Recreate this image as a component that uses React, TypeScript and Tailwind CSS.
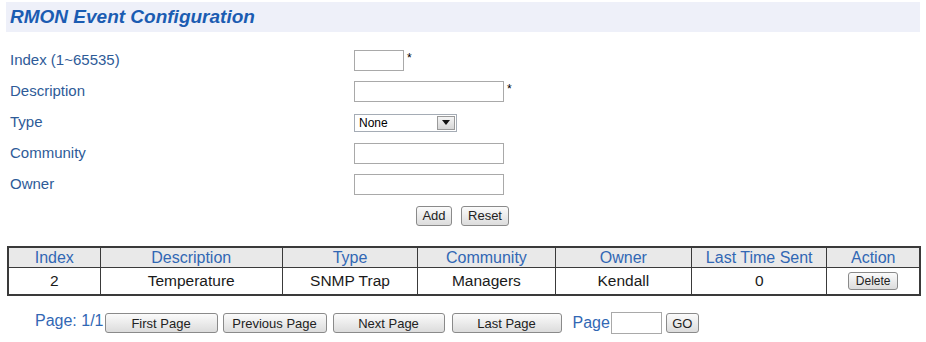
import React from 'react';

const font = { fontFamily: '"Liberation Sans", Arial, sans-serif' };

const fields = [
  { label: 'Index (1~65535)', kind: 'short', req: true },
  { label: 'Description', kind: 'long', req: true },
  { label: 'Type', kind: 'select', req: false },
  { label: 'Community', kind: 'long', req: false },
  { label: 'Owner', kind: 'long', req: false },
];

const cols = [
  { name: 'Index', w: 'w-[92px]' },
  { name: 'Description', w: 'w-[183px]' },
  { name: 'Type', w: 'w-[136px]' },
  { name: 'Community', w: 'w-[138px]' },
  { name: 'Owner', w: 'w-[137px]' },
  { name: 'Last Time Sent', w: 'w-[136px]' },
  { name: 'Action', w: 'w-[92px]' },
];

const row = ['2', 'Temperature', 'SNMP Trap', 'Managers', 'Kendall', '0'];

const btn =
  'border border-[#8a8a8a] rounded-[3px] bg-gradient-to-b from-[#fbfbfb] to-[#dcdcdc] text-[#222] leading-none';

function Field({ kind }: { kind: string }) {
  if (kind === 'select') {
    return (
      <div className="flex h-[18px] w-[103px] items-center border border-[#a5acb5] bg-white">
        <span className="flex-1 pl-[4px] text-[12px] text-black">None</span>
        <span className="mr-[1px] flex h-[14px] w-[18px] items-center justify-center border border-[#9a9a9a] bg-gradient-to-b from-[#f4f4f4] to-[#d6d6d6]">
          <svg width="8" height="5" viewBox="0 0 8 5">
            <path d="M0 0h8L4 5z" fill="#111" />
          </svg>
        </span>
      </div>
    );
  }
  return (
    <div
      className={`border border-[#a9a9a9] bg-white ${kind === 'short' ? 'h-[21px] w-[50px]' : 'h-[21px] w-[150px]'}`}
    />
  );
}

export default function App() {
  return (
    <div className="h-[342px] w-[926px] overflow-hidden bg-white" style={font}>
      <div className="mx-[6px] mt-[2px] flex h-[30px] items-center bg-[#eef0f9] pl-[4px]">
        <h1 className="text-[19px] font-bold italic text-[#1b5cb2]">RMON Event Configuration</h1>
      </div>

      <div className="mt-[13px] flex flex-col">
        {fields.map((f) => (
          <div key={f.label} className="flex h-[31px] items-center">
            <span className="w-[354px] pl-[10px] text-[15px] text-[#2e5b98]">{f.label}</span>
            <Field kind={f.kind} />
            {f.req && <span className="mb-[6px] ml-[3px] text-[12px] text-black">*</span>}
          </div>
        ))}
        <div className="flex h-[31px] items-center pl-[416px] gap-[9px]">
          <button className={`${btn} h-[20px] w-[36px] text-[13px]`}>Add</button>
          <button className={`${btn} h-[20px] w-[48px] text-[13px]`}>Reset</button>
        </div>
      </div>

      <div className="ml-[7px] mt-[15px] w-[914px] border-2 border-[#3a3a3a]">
        <div className="flex h-[20px] border-b border-[#3a3a3a] bg-[#e9e9e9]">
          {cols.map((c, i) => (
            <div
              key={c.name}
              className={`${c.w} flex items-center justify-center text-[16px] text-[#3167b4] ${i < cols.length - 1 ? 'border-r border-[#3a3a3a]' : ''}`}
            >
              {c.name}
            </div>
          ))}
        </div>
        <div className="flex h-[26px]">
          {cols.map((c, i) => (
            <div
              key={c.name}
              className={`${c.w} flex items-center justify-center text-[15.5px] text-[#1a1a1a] ${i < cols.length - 1 ? 'border-r border-[#3a3a3a]' : ''}`}
            >
              {i < row.length ? (
                row[i]
              ) : (
                <button className={`${btn} h-[18px] w-[50px] text-[12px]`}>Delete</button>
              )}
            </div>
          ))}
        </div>
      </div>

      <div className="mt-[13px] flex items-center pl-[35px]">
        <span className="mb-[4px] text-[16px] text-[#3167b4]">Page: 1/1</span>
        <button className={`${btn} ml-[1px] h-[20px] w-[113px] text-[13px]`}>First Page</button>
        <button className={`${btn} ml-[5px] h-[20px] w-[104px] text-[13px]`}>Previous Page</button>
        <button className={`${btn} ml-[6px] h-[20px] w-[112px] text-[13px]`}>Next Page</button>
        <button className={`${btn} ml-[7px] h-[20px] w-[110px] text-[13px]`}>Last Page</button>
        <span className="ml-[11px] text-[16px] text-[#3167b4]">Page</span>
        <div className="ml-[1px] h-[22px] w-[51px] border border-[#a9a9a9] bg-white" />
        <button className={`${btn} ml-[4px] h-[20px] w-[33px] text-[13px]`}>GO</button>
      </div>
    </div>
  );
}
